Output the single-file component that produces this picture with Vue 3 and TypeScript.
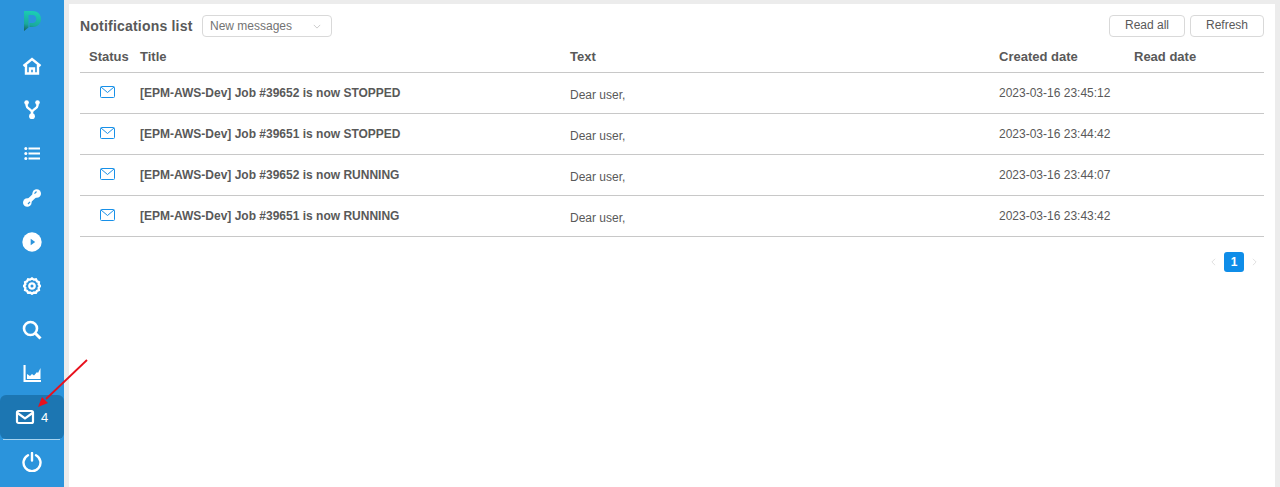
<template>
  <div class="page">
    <aside class="sidebar">
      <div class="logo">
        <svg viewBox="0 0 20 22" width="20" height="22">
          <defs>
            <linearGradient id="logoFill" x1="0.3" y1="0" x2="0.1" y2="1">
              <stop offset="0" stop-color="#1bcdb4" />
              <stop offset="0.65" stop-color="#19a99c" />
              <stop offset="1" stop-color="#17615c" />
            </linearGradient>
          </defs>
          <path fill="url(#logoFill)" d="M2 1h8.500c5 0 8.500 3.300 8.500 8s-3.500 8-8.500 8H7.500v-4H10.500c2.200 0 3.800-1.600 3.800-4s-1.600-4-3.800-4H6.500v12.500L2 21z" />
        </svg>
      </div>

      <a class="nav-item">
        <svg viewBox="0 0 20 20" width="20" height="20"><path class="stroke" stroke-width="2.400" d="M1.500 10 10 3l8.500 7M4 9v8.500h12V9M8 17.500v-5h4v5" /></svg>
      </a>
      <a class="nav-item">
        <svg viewBox="0 0 20 20" width="20" height="20">
          <path class="stroke" stroke-width="2.400" d="M4.600 2.500V5.500C4.600 9 10 9 10 12.500V16M15.500 2.500V5.500C15.500 9 10 9 10 12.500" />
          <circle class="fill" cx="4.600" cy="2.500" r="2.300" /><circle class="fill" cx="15.500" cy="2.500" r="2.300" /><circle class="fill" cx="10" cy="16.200" r="2.900" />
        </svg>
      </a>
      <a class="nav-item">
        <svg viewBox="0 0 20 20" width="20" height="20">
          <path class="stroke" stroke-width="2" d="M6.500 4.500H18M6.500 9.500H18M6.500 14.500H18" />
          <circle class="fill" cx="3.800" cy="4.500" r="1.500" /><circle class="fill" cx="3.800" cy="9.500" r="1.500" /><circle class="fill" cx="3.800" cy="14.500" r="1.500" />
        </svg>
      </a>
      <a class="nav-item">
        <svg viewBox="0 0 20 20" width="20" height="20">
          <circle class="fill" cx="5.300" cy="14.500" r="4.300" />
          <circle class="fill" cx="14.700" cy="5.500" r="4.300" />
          <path class="stroke" stroke-width="4.600" d="M5.300 14.500 14.700 5.500" />
          <path class="stroke-blue" d="M14.500 3.500l-2 2.200M6 16l2-2.200" />
        </svg>
      </a>
      <a class="nav-item">
        <svg viewBox="0 0 20 20" width="20" height="20">
          <circle class="fill" cx="10" cy="10" r="9.700" />
          <path fill="#2b94dc" d="M8.700 6.800 13.200 10l-4.500 3.200z" />
        </svg>
      </a>
      <a class="nav-item">
        <svg viewBox="0 0 20 20" width="18" height="18">
          <path class="stroke" stroke-width="2.600" d="M10 1.500l2 1.400 2.400-.3 1.100 2.100 2.200 1-.3 2.400L19 10l-1.600 2 .3 2.400-2.200 1-1.100 2.100-2.400-.3-2 1.400-2-1.400-2.400.3-1.100-2.100-2.200-1 .3-2.400L1 10l1.600-1.900-.3-2.400 2.200-1 1.100-2.100 2.400.3z" />
          <circle class="stroke" stroke-width="2.600" cx="10" cy="10" r="3" />
        </svg>
      </a>
      <a class="nav-item">
        <svg viewBox="0 0 20 20" width="20" height="20">
          <circle class="stroke" stroke-width="2.600" cx="8.500" cy="8.500" r="6.500" />
          <path class="stroke" stroke-width="3" d="M13.500 13.500 18.500 18.500" />
        </svg>
      </a>
      <a class="nav-item">
        <svg viewBox="0 0 20 20" width="20" height="20">
          <path class="fill" d="M1.500 1h2.100v15H19v2H1.500z" />
          <path class="fill" d="M5 15v-5l3 2 2-2 2 1.500L15 8l1 1 2.500-5v11z" />
        </svg>
      </a>
      <a class="nav-item nav-item--active">
        <svg viewBox="0 0 20 20" width="20" height="20">
          <rect class="stroke" stroke-width="2.200" x="2" y="4" width="16" height="12" rx="1.500" />
          <path class="stroke" stroke-width="2.200" d="M2.500 6 10 11.500 17.500 6" />
        </svg>
        <span class="nav-count">4</span>
      </a>
      <div class="nav-divider"></div>
      <a class="nav-item">
        <svg viewBox="0 0 20 20" width="20" height="20">
          <path class="stroke" stroke-width="2.400" stroke-linecap="round" d="M6 3.200a8.500 8.500 0 1 0 8 0M10 1v7.500" />
        </svg>
      </a>
    </aside>

    <main class="content">
      <div class="toolbar">
        <span class="toolbar__title">Notifications list</span>
        <div class="select">
          <span>New messages</span>
          <svg viewBox="0 0 10 6" width="8" height="5"><path d="M1 1l4 4 4-4" fill="none" stroke="#bfbfbf" stroke-width="1" /></svg>
        </div>
        <div class="toolbar__actions">
          <button class="btn btn--read">Read all</button>
          <button class="btn btn--refresh">Refresh</button>
        </div>
      </div>

      <table class="table">
        <colgroup>
          <col class="col-status" /><col class="col-title" /><col class="col-text" /><col class="col-created" /><col />
        </colgroup>
        <thead>
          <tr>
            <th class="cell-status">Status</th>
            <th>Title</th>
            <th>Text</th>
            <th>Created date</th>
            <th>Read date</th>
          </tr>
        </thead>
        <tbody>
          <tr v-for="row in rows" :key="row.created">
            <td class="cell-status">
              <svg class="mail" viewBox="0 0 15 12" width="15" height="12">
                <rect x="0.500" y="0.500" width="14" height="11" rx="1" fill="none" stroke="#1890e8" />
                <path d="M1 1l6.500 5.500L14 1" fill="none" stroke="#1890e8" />
              </svg>
            </td>
            <td class="cell-title">{{ row.title }}</td>
            <td class="cell-text">Dear user,</td>
            <td class="cell-date">{{ row.created }}</td>
            <td></td>
          </tr>
        </tbody>
      </table>

      <div class="pager">
        <svg viewBox="0 0 6 10" width="5" height="8"><path d="M5 1 1 5l4 4" fill="none" stroke="#d9d9d9" /></svg>
        <span class="pager__page">1</span>
        <svg viewBox="0 0 6 10" width="5" height="8"><path d="M1 1l4 4-4 4" fill="none" stroke="#d9d9d9" /></svg>
      </div>
    </main>

    <svg class="arrow" viewBox="0 0 100 60" width="100" height="60">
      <path d="M87 8 46 47" stroke="#e8101c" stroke-width="1.800" fill="none" />
      <path d="M38 55l4-10 6 6z" fill="#e8101c" />
    </svg>
  </div>
</template>

<script setup lang="ts">
interface NotificationRow {
  title: string
  created: string
}

const rows: NotificationRow[] = [
  { title: '[EPM-AWS-Dev] Job #39652 is now STOPPED', created: '2023-03-16 23:45:12' },
  { title: '[EPM-AWS-Dev] Job #39651 is now STOPPED', created: '2023-03-16 23:44:42' },
  { title: '[EPM-AWS-Dev] Job #39652 is now RUNNING', created: '2023-03-16 23:44:07' },
  { title: '[EPM-AWS-Dev] Job #39651 is now RUNNING', created: '2023-03-16 23:43:42' }
]
</script>

<style>
body {
  margin: 0;
  background: #ececec;
}
</style>

<style scoped>
.page {
  position: relative;
  display: flex;
  height: 487px;
  overflow: hidden;
  background: #ececec;
  font-family: "Liberation Sans", Arial, sans-serif;
  font-size: 12px;
  color: #595959;
}

.sidebar {
  width: 64px;
  flex-shrink: 0;
  display: flex;
  flex-direction: column;
  align-items: stretch;
  background: #2b94dc;
}

.logo {
  height: 44px;
  display: flex;
  justify-content: center;
  padding-top: 10px;
  box-sizing: border-box;
}

.nav-item {
  height: 44px;
  flex-shrink: 0;
  display: flex;
  align-items: center;
  justify-content: center;
}

.nav-item--active {
  justify-content: flex-start;
  gap: 6px;
  margin-top: -1px;
  padding-left: 15px;
  background: #1c76b2;
  border-radius: 6px;
}

.nav-divider {
  height: 1px;
  flex-shrink: 0;
  margin: 0 4px 0 3px;
  background: #a5d3f0;
}

.nav-count {
  font-size: 13px;
  color: #fff;
}

.fill {
  fill: #fff;
}

.stroke {
  fill: none;
  stroke: #fff;
}

.stroke-blue {
  fill: none;
  stroke: #2b94dc;
  stroke-width: 1.2;
}

.content {
  flex: 1;
  margin: 4px 5px 0;
  padding: 11px 11px 0;
  background: #fff;
}

.toolbar {
  display: flex;
  align-items: center;
  height: 22px;
}

.toolbar__title {
  font-size: 14px;
  font-weight: 700;
  letter-spacing: 0.2px;
  color: #595959;
  margin-right: 9px;
}

.select {
  width: 130px;
  height: 22px;
  box-sizing: border-box;
  display: flex;
  align-items: center;
  justify-content: space-between;
  padding: 0 10px 0 7.5px;
  border: 1px solid #d9d9d9;
  border-radius: 4px;
  font-size: 12px;
  color: #737373;
}

.toolbar__actions {
  margin-left: auto;
  display: flex;
  gap: 5px;
}

.btn {
  height: 22px;
  padding: 0 0 2px;
  background: #fff;
  border: 1px solid #d9d9d9;
  border-radius: 4px;
  font-family: inherit;
  font-size: 12px;
  color: #595959;
}

.btn--read {
  width: 76px;
}

.btn--refresh {
  width: 74px;
}

.table {
  width: 100%;
  table-layout: fixed;
  border-collapse: collapse;
  margin-top: 7px;
}

.col-status {
  width: 52px;
}

.col-title {
  width: 430px;
}

.col-text {
  width: 429px;
}

.col-created {
  width: 135px;
}

th,
td {
  box-sizing: border-box;
  padding: 0 8px;
  text-align: left;
}

th {
  height: 28px;
  padding-bottom: 3px;
  font-size: 13px;
  font-weight: 700;
  color: #595959;
  border-bottom: 1px solid #c8c8c8;
}

td {
  height: 41px;
  border-bottom: 1px solid #c8c8c8;
}

th.cell-status {
  padding-left: 9px;
  padding-right: 0;
}

td.cell-status {
  padding: 0;
}

.mail {
  display: block;
  margin: 0 auto 1px 20px;
}

.cell-title {
  font-weight: 700;
}

.cell-text {
  padding-top: 5px;
}

.cell-date {
  padding-top: 1px;
}

.pager {
  display: flex;
  justify-content: flex-end;
  align-items: center;
  gap: 8px;
  margin-top: 15px;
  padding-right: 7px;
}

.pager__page {
  width: 20px;
  height: 20px;
  display: flex;
  align-items: center;
  justify-content: center;
  border-radius: 3px;
  background: #0f8de8;
  color: #fff;
  font-weight: 700;
}

.arrow {
  position: absolute;
  left: 0;
  top: 352px;
}
</style>
